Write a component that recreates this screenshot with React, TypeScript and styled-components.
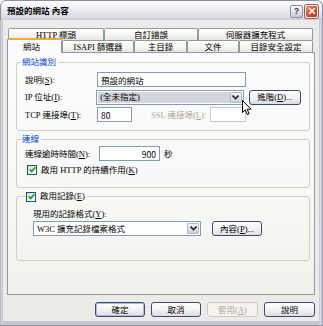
import React from "react";
import styled, { createGlobalStyle } from "styled-components";

const GlobalStyle = createGlobalStyle`
  html, body {
    margin: 0;
    padding: 0;
    background: #ffffff;
  }
  body {
    font-family: "Liberation Serif", "Noto Sans CJK TC", serif;
    font-size: 8.5px;
    line-height: 10px;
    color: #000;
  }
  * {
    box-sizing: border-box;
  }
`;

const backTabs = [
  { label: "HTTP 標頭", w: 96 },
  { label: "自訂錯誤", w: 94 },
  { label: "伺服器擴充程式", w: 115 },
];

const frontTabs = [
  { label: "網站", w: 55, active: true },
  { label: "ISAPI 篩選器", w: 72 },
  { label: "主目錄", w: 53 },
  { label: "文件", w: 52 },
  { label: "目錄安全設定", w: 74 },
];

const Chevron = () => (
  <svg width="7" height="5" viewBox="0 0 7 5">
    <path d="M0.5 0.5 L3.5 3.5 L6.5 0.5" fill="none" stroke="#1d2433" strokeWidth="1.6" />
  </svg>
);

const Check = () => (
  <svg width="7" height="7" viewBox="0 0 7 7">
    <path d="M0.8 3.4 L2.7 5.4 L6.3 1.2" fill="none" stroke="#21a121" strokeWidth="1.7" />
  </svg>
);

const App = () => {
  return (
    <>
      <GlobalStyle />
      <Window>
        <TitleBar>
          <Title>預設的網站 內容</Title>
          <TitleButtons>
            <HelpButton>?</HelpButton>
            <CloseButton>
              <svg width="8" height="8" viewBox="0 0 8 8">
                <path d="M1 1 L7 7 M7 1 L1 7" stroke="#fff" strokeWidth="1.6" />
              </svg>
            </CloseButton>
          </TitleButtons>
        </TitleBar>

        <Client>
          <TabStrip>
            <TabRow $pad={1}>
              {backTabs.map((t) => (
                <Tab key={t.label} $w={t.w}>
                  {t.label}
                </Tab>
              ))}
            </TabRow>
            <TabRow $pad={0}>
              {frontTabs.map((t) => (
                <Tab key={t.label} $w={t.w} $active={t.active}>
                  {t.label}
                </Tab>
              ))}
            </TabRow>
          </TabStrip>

          <Panel>
            <Group $h={74}>
              <Legend>網站識別</Legend>
              <Rows $gap={2.5} $top={5}>
                <Row>
                  <Label $w={72}>
                    說明(<u>S</u>):
                  </Label>
                  <Field $w={149}>預設的網站</Field>
                </Row>
                <Row>
                  <Label $w={72}>
                    IP 位址(<u>I</u>):
                  </Label>
                  <Combo $w={149}>
                    <ComboText $selected>(全未指定)</ComboText>
                    <DropButton>
                      <Chevron />
                    </DropButton>
                  </Combo>
                  <Button $w={53} $ml={5}>
                    進階(<u>D</u>)...
                  </Button>
                </Row>
                <Row>
                  <Label $w={72}>
                    TCP 連接埠(<u>T</u>):
                  </Label>
                  <Field $w={35}>80</Field>
                  <Label $w={59} $ml={19} $disabled>
                    SSL 連接埠(<u>L</u>):
                  </Label>
                  <Field $w={36} $disabled />
                </Row>
              </Rows>
            </Group>

            <Group $h={54}>
              <Legend>連線</Legend>
              <Rows $gap={3} $top={2}>
                <Row>
                  <Label $w={74}>
                    連線逾時時間(<u>N</u>):
                  </Label>
                  <Field $w={61} $right>
                    900
                  </Field>
                  <Unit>秒</Unit>
                </Row>
                <CheckRow $ml={2}>
                  <CheckBox>
                    <Check />
                  </CheckBox>
                  <span>
                    啟用 HTTP 的持續作用(<u>K</u>)
                  </span>
                </CheckRow>
              </Rows>
            </Group>

            <Group $h={70}>
              <Legend $plain>
                <CheckRow $ml={0}>
                  <CheckBox>
                    <Check />
                  </CheckBox>
                  <span>
                    啟用記錄(<u>E</u>)
                  </span>
                </CheckRow>
              </Legend>
              <Rows $gap={2} $top={7} $left={8}>
                <Label $w={120}>
                  現用的記錄格式(<u>Y</u>):
                </Label>
                <Row>
                  <Combo $w={168}>
                    <ComboText>W3C 擴充記錄檔案格式</ComboText>
                    <DropButton>
                      <Chevron />
                    </DropButton>
                  </Combo>
                  <Button $w={50} $ml={11}>
                    內容(<u>P</u>)...
                  </Button>
                </Row>
              </Rows>
            </Group>
          </Panel>

          <ButtonBar>
            <Button $w={50} $default>
              確定
            </Button>
            <Button $w={50}>取消</Button>
            <Button $w={51} $disabled>
              套用(<u>A</u>)
            </Button>
            <Button $w={51}>說明</Button>
          </ButtonBar>
        </Client>

        <Cursor width="10" height="16" viewBox="0 0 10 16">
          <path
            d="M0.5 0.5 L0.5 12.5 L3.3 9.8 L5.2 14.6 L7.1 13.8 L5.2 9.2 L9 9.2 Z"
            fill="#fff"
            stroke="#000"
            strokeWidth="1"
            strokeLinejoin="round"
          />
        </Cursor>
      </Window>
    </>
  );
};

export default App;

const Window = styled.div`
  position: relative;
  width: 323px;
  height: 326px;
  display: flex;
  flex-direction: column;
  padding: 0 4px 4px 3px;
  background: linear-gradient(to right, #9c9eae 0px, #d7d8e1 1px, #c3c5d2 3px, #c3c5d2 calc(100% - 4px), #dcdde5 calc(100% - 2px), #8d8fa0 100%);
  border-bottom: 1px solid #8d8fa0;
  border-radius: 6px 6px 0 0;
  overflow: hidden;
`;

const TitleBar = styled.div`
  height: 21px;
  margin: 0 -4px 0 -3px;
  padding: 0 4px 0 6px;
  display: flex;
  align-items: center;
  justify-content: space-between;
  background: linear-gradient(#ffffff, #ebebf0 45%, #dcdce4 85%, #c9cad6);
  border: 1px solid #8d8fa0;
  border-bottom: none;
  border-radius: 6px 6px 0 0;
`;

const Title = styled.div`
  font-weight: bold;
  font-size: 8.5px;
  color: #000;
  padding-top: 1px;
`;

const TitleButtons = styled.div`
  display: flex;
  gap: 2px;
  padding-top: 1px;
`;

const HelpButton = styled.div`
  width: 13px;
  height: 13px;
  border: 1px solid #8a8ea2;
  border-radius: 2px;
  background: linear-gradient(#ffffff, #dfe0e8 60%, #c6c8d6);
  display: flex;
  align-items: center;
  justify-content: center;
  font-family: "Liberation Sans", sans-serif;
  font-weight: bold;
  font-size: 9px;
  color: #3a4060;
`;

const CloseButton = styled.div`
  width: 13px;
  height: 13px;
  border: 1px solid #ffffff;
  border-radius: 2px;
  background: linear-gradient(135deg, #f0906e, #dc4a2a 55%, #c23416);
  display: flex;
  align-items: center;
  justify-content: center;
  box-shadow: 0 0 0 1px #a05a4a;
`;

const Client = styled.div`
  flex: 1;
  display: flex;
  flex-direction: column;
  padding: 8px 4px 4px 4px;
  background: #ecebe8;
`;

const TabStrip = styled.div`
  display: flex;
  flex-direction: column;
  width: 308px;
`;

const TabRow = styled.div<{ $pad: number }>`
  display: flex;
  align-items: flex-end;
  height: 12px;
  padding-left: ${(p) => p.$pad}px;
`;

const Tab = styled.div<{ $w: number; $active?: boolean }>`
  position: relative;
  z-index: ${(p) => (p.$active ? 3 : 0)};
  width: ${(p) => p.$w}px;
  height: ${(p) => (p.$active ? 15 : 12)}px;
  margin-bottom: ${(p) => (p.$active ? -1 : 0)}px;
  display: flex;
  align-items: center;
  justify-content: center;
  border: 1px solid #919b9c;
  border-bottom: none;
  border-top: ${(p) => (p.$active ? "2px solid #f2a93a" : "1px solid #919b9c")};
  border-radius: 2px 2px 0 0;
  background: ${(p) =>
    p.$active ? "#fcfcfe" : "linear-gradient(#ffffff, #f3f3ef 60%, #e6e5e0)"};
  white-space: nowrap;
  padding-right: ${(p) => (p.$active ? 6 : 0)}px;
`;

const Panel = styled.div`
  position: relative;
  z-index: 1;
  width: 308px;
  height: 243px;
  border: 1px solid #919b9c;
  background: linear-gradient(#fcfcfe, #f6f6f3 70%, #f1f0ea);
  padding: 4px 4px 0 8px;
  display: flex;
  flex-direction: column;
  gap: 3px;
`;

const Group = styled.fieldset<{ $h: number }>`
  margin: 0;
  width: 294px;
  height: ${(p) => p.$h}px;
  border: 1px solid #d0d0bf;
  border-radius: 3px;
  padding: 0 8px 0 8px;
  min-inline-size: 0;
`;

const Legend = styled.legend<{ $plain?: boolean }>`
  margin-left: ${(p) => (p.$plain ? 0 : -4)}px;
  padding: 0 2px 0 1px;
  line-height: ${(p) => (p.$plain ? 11 : 10)}px;
  color: ${(p) => (p.$plain ? "#000" : "#0046d5")};
`;

const Rows = styled.div<{ $gap: number; $top: number; $left?: number }>`
  display: flex;
  flex-direction: column;
  gap: ${(p) => p.$gap}px;
  padding-top: ${(p) => p.$top}px;
  padding-left: ${(p) => p.$left || 0}px;
`;

const Row = styled.div`
  display: flex;
  align-items: center;
  height: 15px;
`;

const Label = styled.div<{ $w: number; $ml?: number; $disabled?: boolean }>`
  width: ${(p) => p.$w}px;
  margin-left: ${(p) => p.$ml || 0}px;
  white-space: nowrap;
  color: ${(p) => (p.$disabled ? "#aca899" : "#000")};
`;

const Field = styled.div<{ $w: number; $right?: boolean; $disabled?: boolean }>`
  width: ${(p) => p.$w}px;
  height: 15px;
  border: 1px solid ${(p) => (p.$disabled ? "#c5cbd6" : "#7f9db9")};
  background: #ffffff;
  padding: 0 3px;
  display: flex;
  align-items: center;
  justify-content: ${(p) => (p.$right ? "flex-end" : "flex-start")};
  white-space: nowrap;
  font-family: "Noto Sans CJK TC", sans-serif;
`;

const Combo = styled.div<{ $w: number }>`
  width: ${(p) => p.$w}px;
  height: 15px;
  border: 1px solid #7f9db9;
  background: #ffffff;
  padding: 1px;
  display: flex;
  align-items: stretch;
`;

const ComboText = styled.div<{ $selected?: boolean }>`
  flex: 1;
  display: flex;
  align-items: center;
  padding: 0 2px;
  white-space: nowrap;
  background: ${(p) => (p.$selected ? "#d2d4de" : "transparent")};
`;

const DropButton = styled.div`
  width: 12px;
  border: 1px solid #b3b8c8;
  border-radius: 1px;
  background: linear-gradient(#f4f5f9, #dfe1ea 60%, #c9ccda);
  display: flex;
  align-items: center;
  justify-content: center;
`;

const Button = styled.div<{ $w: number; $ml?: number; $default?: boolean; $disabled?: boolean }>`
  width: ${(p) => p.$w}px;
  height: 15px;
  margin-left: ${(p) => p.$ml || 0}px;
  display: flex;
  align-items: center;
  justify-content: center;
  white-space: nowrap;
  border: 1px solid ${(p) => (p.$disabled ? "#cbc9c0" : "#3b4a6e")};
  border-radius: 3px;
  background: ${(p) =>
    p.$disabled ? "#f4f3ee" : "linear-gradient(#ffffff, #f1f1f4 55%, #dcdce4)"};
  color: ${(p) => (p.$disabled ? "#aca899" : "#000")};
  box-shadow: ${(p) => (p.$default ? "inset 0 0 0 1px #a9bde8" : "none")};
`;

const Unit = styled.div`
  margin-left: 4px;
`;

const CheckRow = styled.div<{ $ml: number }>`
  display: flex;
  align-items: center;
  gap: 4px;
  height: 11px;
  margin-left: ${(p) => p.$ml}px;
  white-space: nowrap;
`;

const CheckBox = styled.div`
  width: 10px;
  height: 10px;
  border: 1px solid #1c5180;
  background: linear-gradient(135deg, #dcdcd7, #ffffff);
  display: flex;
  align-items: center;
  justify-content: center;
`;

const ButtonBar = styled.div`
  display: flex;
  justify-content: flex-end;
  gap: 6px;
  margin-top: 7px;
  padding-right: 0;
`;

const Cursor = styled.svg`
  position: absolute;
  left: 242px;
  top: 100px;
  z-index: 10;
`;
